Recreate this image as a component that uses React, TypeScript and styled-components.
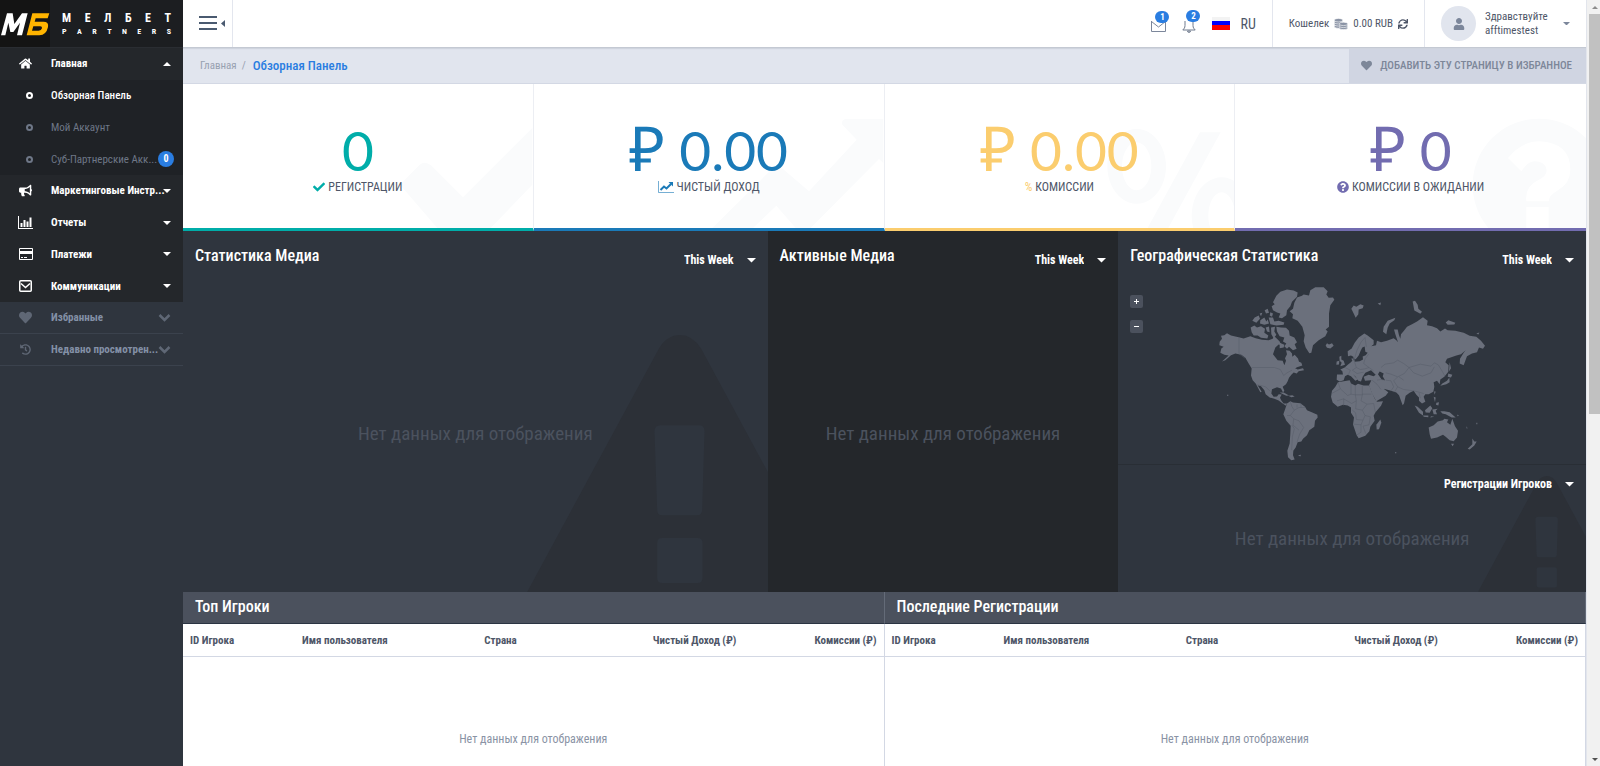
import React from 'react';
import styled, { createGlobalStyle, css } from 'styled-components';
import {
  FaHome, FaBullhorn, FaHeart, FaHistory, FaCheck,
  FaQuestionCircle, FaUser, FaSync,
} from 'react-icons/fa';

const c = {
  side: '#2f353e', menu: '#24272b', sub: '#1f2226', text: '#4e5668',
  muted: '#8a93a5', blue: '#2a7de1', line: '#d3d8e4',
};

const GlobalStyle = createGlobalStyle`
  * { box-sizing: border-box; }
  body { margin: 0; background: #fff; }
  body, button, select, table {
    font-family: 'Roboto Condensed', 'Open Sans Condensed', 'Open Sans', sans-serif;
  }
  a { color: inherit; text-decoration: none; }
  ul { list-style: none; margin: 0; padding: 0; }
  h2, p { margin: 0; }
  button { border: 0; padding: 0; background: none; color: inherit; cursor: pointer; }
`;

const Frame = styled.div`
  display: grid;
  grid-template-columns: 183px minmax(0, 1fr) 14px;
  height: 100vh;
  overflow: hidden;
`;

/* Sidebar */

const Sidebar = styled.aside`
  background: ${c.side};
  color: #fff;
`;

const Brand = styled.a`
  display: flex;
  height: 48px;
  background: #1c1e21;
  border-bottom: 1px solid #2a2d32;
`;

const BrandMark = styled.span`
  display: flex;
  align-items: center;
  width: 50px;
  background: #141414;
`;

const BrandText = styled.span`
  display: flex;
  flex: 1;
  flex-direction: column;
  justify-content: center;
  padding: 0 12px;
`;

const Spread = styled.span<{ $size: number }>`
  display: flex;
  justify-content: space-between;
  font-size: ${(p) => p.$size}px;
  line-height: ${(p) => p.$size + 4}px;
  font-weight: 700;
`;

const Menu = styled.ul`
  display: flex;
  flex-direction: column;
  height: 254px;
  background: ${c.menu};
`;

const MenuItem = styled.li<{ $rows?: number }>`
  display: grid;
  flex: ${(p) => p.$rows ?? 1} 1 0;
  grid-auto-rows: 1fr;
`;

const SubMenu = styled.ul`
  display: grid;
  grid-row: span 3;
  grid-auto-rows: 1fr;
  background: ${c.sub};
`;

const rowStyle = css`
  display: grid;
  grid-template-columns: 51px minmax(0, 1fr) auto;
  align-items: center;
  width: 100%;
  height: 100%;
  padding-right: 12px;
  text-align: left;
  font-size: 11px;
  font-weight: 700;
  white-space: nowrap;
`;

const MenuButton = styled.button`${rowStyle}`;

const SubLink = styled.a<{ $active?: boolean }>`
  ${rowStyle}
  padding-right: 9px;
  color: ${(p) => (p.$active ? '#fff' : '#6e7787')};
  font-weight: ${(p) => (p.$active ? 500 : 400)};
`;

const RowIcon = styled.span`
  display: flex;
  justify-content: center;
  font-size: 13px;
`;

const Dot = styled.span`
  width: 7px;
  height: 7px;
  justify-self: center;
  margin-left: 8px;
  border: 2px solid currentColor;
  border-radius: 50%;
`;

const Count = styled.span`
  width: 16px;
  height: 16px;
  border-radius: 50%;
  background: ${c.blue};
  color: #fff;
  font-size: 10px;
  line-height: 16px;
  font-weight: 700;
  text-align: center;
`;

const Extra = styled.li`
  height: 32px;
  border-bottom: 1px solid #3b424d;
  color: #8390a6;
  & svg { color: #5f6775; }
`;

/* Header */

const Main = styled.main`
  display: flex;
  flex-direction: column;
  min-width: 0;
  overflow: hidden;
`;

const Header = styled.header`
  display: flex;
  flex: none;
  height: 48px;
  border-bottom: 1px solid #c4c9d3;
  box-shadow: 0 1px 1px #cfd4de;
  color: ${c.text};
  z-index: 1;
`;

const Toggle = styled.button`
  display: flex;
  align-items: center;
  gap: 4px;
  width: 50px;
  padding-left: 16px;
  border-right: 1px solid #e3e6ee;
`;

const HeaderGroup = styled.div<{ $gap: number; $push?: boolean }>`
  display: flex;
  align-items: center;
  gap: ${(p) => p.$gap}px;
  padding: 0 16px;
  margin-left: ${(p) => (p.$push ? 'auto' : '0')};
  border-right: 1px solid #e3e6ee;
  font-size: 11px;
  white-space: nowrap;
  &:last-child { border-right: 0; }
`;

const Notice = styled.button`
  position: relative;
  display: flex;
  padding-top: 4px;
`;

const NoticeBadge = styled.span`
  position: absolute;
  top: -5px;
  left: 4px;
  width: 14px;
  height: 12px;
  border-radius: 6px;
  background: ${c.blue};
  color: #fff;
  font-size: 9px;
  line-height: 12px;
  font-weight: 700;
`;

const Language = styled.button`
  display: flex;
  align-items: center;
  gap: 10px;
  font-size: 14px;
`;

const Avatar = styled.span`
  display: grid;
  place-items: center;
  width: 35px;
  height: 35px;
  border-radius: 50%;
  background: #e1e5ee;
  color: #7c879b;
  font-size: 12px;
`;

const Hello = styled.span`
  width: 69px;
  line-height: 14px;
`;

/* Breadcrumb */

const Crumbs = styled.nav`
  display: flex;
  flex: none;
  height: 36px;
  align-items: center;
  gap: 5px;
  padding-left: 17px;
  border-bottom: 1px solid ${c.line};
  background: #e1e5ee;
  color: #98a1b1;
  font-size: 11px;
`;

const Current = styled.a`
  padding-left: 2px;
  color: ${c.blue};
  font-size: 13px;
  font-weight: 500;
`;

const Favourite = styled.button`
  display: flex;
  align-items: center;
  gap: 8px;
  height: 100%;
  margin-left: auto;
  padding: 0 14px 0 12px;
  background: #d0d5e2;
  color: #7d8799;
  font-size: 11px;
  font-weight: 500;
  text-transform: uppercase;
`;

/* Summary cards */

const Cards = styled.section`
  display: grid;
  flex: none;
  grid-template-columns: repeat(4, 1fr);
`;

const Card = styled.article<{ $tone: string }>`
  position: relative;
  display: flex;
  flex-direction: column;
  align-items: center;
  height: 147px;
  padding-top: 36px;
  border-right: 1px solid #eceef3;
  border-bottom: 3px solid ${(p) => p.$tone};
  color: ${(p) => p.$tone};
  overflow: hidden;
  &:last-child { border-right: 0; }
`;

const Amount = styled.p`
  position: relative;
  display: flex;
  align-items: baseline;
  gap: 14px;
  height: 60px;
  font-family: Lato, sans-serif;
  font-size: 55px;
  line-height: 60px;
`;

const Rouble = styled.span`
  font-family: 'Liberation Sans', sans-serif;
  font-size: 62px;
  line-height: 60px;
`;

const CardLabel = styled.p`
  position: relative;
  display: flex;
  align-items: center;
  gap: 3px;
  font-size: 12px;
  line-height: 14px;
  text-transform: uppercase;
  & > b { color: ${c.text}; font-weight: 400; }
`;

const Watermark = styled.svg`
  position: absolute;
  right: 0;
  bottom: 0;
  fill: #fafbfc;
`;

/* Dark panels */

const Panels = styled.section`
  display: grid;
  flex: none;
  grid-template-columns: 5fr 3fr 4fr;
  height: 361px;
  background: ${c.side};
`;

const Panel = styled.article<{ $dark?: boolean }>`
  position: relative;
  display: flex;
  flex-direction: column;
  min-width: 0;
  background: ${(p) => (p.$dark ? c.menu : c.side)};
  color: #fff;
`;

const PanelHead = styled.header`
  position: relative;
  z-index: 1;
  display: flex;
  justify-content: space-between;
  padding: 14px 12px 0;
`;

const Title = styled.h2`
  font-size: 16px;
  line-height: 22px;
  font-weight: 500;
`;

const SelectWrap = styled.label`
  position: relative;
  z-index: 1;
  display: flex;
  align-items: center;
  justify-content: flex-end;
  height: 30px;
  & > svg { position: absolute; right: 0; top: 13px; pointer-events: none; }
`;

const Select = styled.select`
  appearance: none;
  border: 0;
  padding: 0 22px 0 0;
  background: transparent;
  color: #fff;
  font-size: 12px;
  font-weight: 700;
  text-align-last: right;
  & option { color: #222; }
`;

const Empty = styled.p`
  position: relative;
  z-index: 1;
  color: #4b525e;
  font-size: 19px;
  line-height: 24px;
  text-align: center;
`;

const Centered = styled.div`
  display: grid;
  flex: 1;
  place-items: center;
`;

const Alert = styled.svg`
  position: absolute;
  right: 0;
  bottom: 0;
  fill: #2c3037;
`;

const MapArea = styled.div`
  position: relative;
  display: flex;
  flex: 1;
  justify-content: center;
  padding-top: 10px;
`;

const Zoom = styled.div`
  position: absolute;
  top: 20px;
  left: 12px;
  display: grid;
  gap: 12px;
`;

const ZoomButton = styled.button`
  display: grid;
  place-items: center;
  width: 13px;
  height: 13px;
  border-radius: 2px;
  background: #4b515d;
`;

const GeoFoot = styled.div`
  position: relative;
  display: flex;
  flex-direction: column;
  gap: 28px;
  height: 128px;
  padding: 4px 12px 0;
  border-top: 1px solid #292e35;
`;

/* Tables */

const Tables = styled.section`
  display: grid;
  flex: 1;
  grid-template-columns: 1fr 1fr;
`;

const TableTitle = styled(Title)`
  height: 32px;
  padding-left: 12px;
  border-bottom: 1px solid #2b3442;
  border-right: 1px solid #646b78;
  background: #4b515d;
  color: #fff;
  line-height: 30px;
`;

const Table = styled.table`
  width: 100%;
  table-layout: fixed;
  border-spacing: 0;
  border-right: 1px solid ${c.line};
`;

const Th = styled.th<{ $width: number; $right?: boolean }>`
  width: ${(p) => p.$width}%;
  height: 33px;
  padding: 0 7px;
  border-bottom: 1px solid ${c.line};
  color: ${c.text};
  font-size: 11px;
  font-weight: 700;
  white-space: nowrap;
  text-align: ${(p) => (p.$right ? 'right' : 'left')};
`;

const EmptyCell = styled.td`
  height: 163px;
  padding: 0;
  color: ${c.muted};
  font-size: 12px;
  text-align: center;
`;

/* Scrollbar column */

const ScrollTrack = styled.div`
  display: flex;
  flex-direction: column;
  align-items: center;
  padding: 6px 0 5px 2px;
  background: #f1f1f1;
  border-left: 1px solid #e2e5ec;
`;

const ScrollThumb = styled.div`
  width: 11px;
  height: 53%;
  margin: 5px 0 auto;
  background: #c1c1c1;
`;

/* Drawings */

const Caret = ({ up = false, w = 8, fill = 'currentColor' }: { up?: boolean; w?: number; fill?: string }) => (
  <svg width={w} height={w / 2} viewBox="0 0 8 4" fill={fill} aria-hidden="true">
    <path d={up ? 'M0 4L4 0l4 4z' : 'M0 0h8L4 4z'} />
  </svg>
);

const ChevronIcon = () => (
  <svg width="13" height="9" viewBox="0 0 13 9" fill="none" stroke="currentColor" strokeWidth="2.500" aria-hidden="true">
    <path d="M1.500 2l5 5 5-5" />
  </svg>
);

const BarsIcon = () => (
  <svg width="15" height="13" viewBox="0 0 15 13" fill="currentColor">
    <path d="M0 0h1v12h14v1H0zM2.500 7h2v4h-2zM5.500 4h2v7h-2zM8.500 5.500h2V11h-2zM11.500 1.500h2V11h-2z" />
  </svg>
);

const CardIcon = () => (
  <svg width="14" height="12" viewBox="0 0 14 12" fill="currentColor">
    <path fillRule="evenodd" d="M1 0h12q1 0 1 1v10q0 1-1 1H1q-1 0-1-1V1q0-1 1-1zM1 1v2h12V1zM1 6v5h12V6zM2 9h2v1H2zM5 9h3v1H5z" />
  </svg>
);

const MailSquareIcon = () => (
  <svg width="13" height="12" viewBox="0 0 13 12" fill="none" stroke="currentColor" strokeWidth="1.500">
    <rect x="0.750" y="0.750" width="11.500" height="10.500" rx="1" />
    <path d="M2 3.500l4.500 4 4.500-4" />
  </svg>
);

const EnvelopeIcon = () => (
  <svg width="15" height="12" viewBox="0 0 15 12" fill="none" stroke="#7c879b" strokeWidth="1">
    <path d="M.5 1v10.500h14V1M.5 1.500l7 5.500 7-5.500" />
  </svg>
);

const BellIcon = () => (
  <svg width="14" height="14" viewBox="0 0 14 14" fill="none" stroke="#6f7a8d" strokeWidth="1">
    <path d="M3 2v4.500c0 2.500-1 3-2.200 4.500h12.400C12 9.500 11 9 11 6.500V2M5.500 12h3l-.5 1.200H6z" />
  </svg>
);

const FlagIcon = () => (
  <svg width="18" height="13" viewBox="0 0 18 13">
    <path fill="#f3f3f3" d="M0 0h18v4H0z" />
    <path fill="#00f" d="M0 4h18v4H0z" />
    <path fill="#f00" d="M0 8h18v5H0z" />
  </svg>
);

const CoinsIcon = () => (
  <svg width="14" height="12" viewBox="0 0 14 12" fill="#8a93a5" stroke="#fff" strokeWidth=".6">
    <ellipse cx="4.500" cy="8.500" rx="4.200" ry="1.800" />
    <ellipse cx="4.500" cy="6.300" rx="4.200" ry="1.800" />
    <ellipse cx="4.500" cy="4.200" rx="4.200" ry="1.800" />
    <ellipse cx="4.500" cy="2.200" rx="4.200" ry="1.800" />
    <ellipse cx="9.500" cy="9.900" rx="4.200" ry="1.700" />
    <ellipse cx="9.500" cy="7.900" rx="4.200" ry="1.700" />
    <ellipse cx="9.500" cy="5.900" rx="4.200" ry="1.700" />
  </svg>
);

const TrendIcon = () => (
  <svg width="16" height="12" viewBox="0 0 16 12" fill="none" stroke="currentColor">
    <path strokeWidth="1" opacity=".6" d="M.5 0v11.500H16" />
    <path strokeWidth="2" d="M2.500 9L6 5.500l2.500 2L13 3" />
    <path fill="currentColor" stroke="none" d="M10.500 1H15v4.500z" />
  </svg>
);

const HamburgerIcon = () => (
  <svg width="18" height="15" viewBox="0 0 18 15" fill="#4a5a70">
    <path d="M0 0h18v2H0zM0 6h18v2H0zM0 12h18v2H0z" />
  </svg>
);

const LogoMark = () => (
  <svg width="50" height="24" viewBox="0 0 150 72" aria-label="МБ">
    <path fill="#fff" d="M3 70L21 4h17l5 32L66 4h17L66 70H51l9-38-20 28h-9l-6-28-9 38z" />
    <path fill="#ffb400" fillRule="evenodd" d="M97 4h51l-5 15h-36l-3 10h26q17 0 14 16-5 24-26 25H80zM100 43l-4 13h20q8 0 10-7 1-6-5-6z" />
  </svg>
);

const AlertMark = ({ scale }: { scale: number }) => (
  <Alert width={241 * scale} height={257 * scale} viewBox="80 104 722 771" aria-hidden="true">
    <path
      fillRule="evenodd"
      d="M80 875L475 145Q500 104 538 104T602 145L802 515V875ZM480 375Q461 375 462 395L470 630Q470 645 485 645H590Q604 645 605 630L612 395Q613 375 595 375ZM485 713Q470 713 470 728V833Q470 848 485 848H591Q606 848 606 833V728Q606 713 591 713Z"
    />
  </Alert>
);

const WorldMap = () => (
  <svg width="270" height="177" viewBox="320 165 810 530" role="img" aria-label="Карта мира">
    <g fill="#6b707c">
      {/* North America */}
      <path d="M328 335L335 326 332 317 342 315 350 309 362 316 385 321 400 325 420 318 436 324 455 329 475 330 487 326 492 318 500 326 508 334 513 345 505 343 495 352 488 372 502 390 517 392 522 405 527 392 524 384 530 372 527 360 538 362 545 370 546 380 553 374 563 385 566 395 573 398 576 406 560 411 545 420 555 414 562 418 578 414 581 420 565 423 559 430 550 427 543 434 536 443 532 453 527 462 517 470 522 482 518 487 512 475 500 471 485 477 483 490 490 500 500 499 505 492 514 493 509 503 513 511 520 520 530 520 527 527 517 520 505 511 492 506 478 502 466 492 462 480 452 468 442 465 454 485 450 486 436 460 427 450 422 436 424 415 415 400 405 383 393 374 375 370 362 375 345 390 335 394 355 376 342 374 330 368 333 355 340 350 327 345Z" />
      {/* Arctic islands */}
      <path d="M488 216L498 197 510 185 530 178 550 181 562 187 560 200 545 215 540 228 530 240 528 255 515 264 505 262 510 250 500 247 488 240 484 228 493 222Z" />
      <path d="M463 240L472 236 476 248 467 250ZM480 246L488 250 485 260 478 256ZM426 272L433 262 445 256 449 266 438 278ZM448 250L456 248 452 258ZM450 270L462 262 468 274 472 268 476 280 462 284 449 280ZM475 262L488 262 492 274 505 272 522 277 520 284 498 286 480 282Z" />
      <path d="M421 292L432 286 440 292 452 288 464 296 462 308 474 316 471 325 452 323 442 316 430 316 424 306ZM466 292L476 289 478 306 470 304ZM482 292L494 290 492 304 498 314 490 324 483 312Z" />
      <path d="M498 290L512 292 527 293 536 302 538 316 552 322 560 336 553 342 559 356 548 360 536 350 530 356 522 348 528 340 518 334 522 322 508 318 500 304ZM508 338L522 344 520 352 508 354Z" />
      {/* Greenland */}
      <path d="M538 243L548 236 552 218 560 202 575 197 580 193 596 196 600 180 615 171 640 171 652 183 648 193 655 203 668 202 672 209 660 225 656 250 656 290 646 298 652 304 645 318 625 330 608 345 603 368 597 369 586 352 580 333 583 315 576 290 562 272 546 264 548 252Z" />
      <path d="M646 346L650 339 656 343 665 339 670 347 660 355 650 353Z" />
      {/* Caribbean */}
      <path d="M508 487L520 487 536 496 528 497 515 491ZM534 497L546 495 553 499 543 501Z" />
      {/* South America */}
      <path d="M530 520L540 513 548 517 570 519 584 530 590 540 606 547 621 554 622 562 614 572 612 590 597 600 590 615 578 626 573 634 562 636 556 652 549 662 548 675 553 688 543 690 533 681 531 662 538 640 540 610 541 587 528 572 519 552 524 538Z" />
      <path d="M563 675L572 674 570 679Z" />
      {/* Africa */}
      <path d="M683 456L700 453 718 450 722 460 735 466 743 461 760 466 777 466 784 485 793 505 800 515 818 513 812 527 795 547 790 557 793 572 780 590 777 603 765 617 745 624 739 615 728 583 731 562 722 548 722 532 712 526 698 524 682 530 667 517 662 500 665 482 675 470Z" />
      <path d="M810 568L813 578 806 597 799 598 798 584Z" />
      {/* Europe and Asia */}
      <path d="M680 433L698 433 696 423 690 418 703 412 714 402 720 398 726 392 723 385 732 384 733 395 748 393 758 388 757 379 766 375 772 368 765 365 763 349 756 352 751 362 745 376 738 385 730 391 729 380 722 376 713 378 712 363 724 355 733 338 745 322 762 310 772 316 790 330 790 342 783 348 797 345 800 332 812 336 830 332 850 324 858 330 863 336 855 312 851 298 862 298 866 315 870 326 872 312 882 300 890 290 905 282 920 274 938 261 952 272 950 285 965 288 980 294 990 304 1004 295 1012 300 1035 302 1060 308 1078 317 1098 320 1112 332 1124 347 1118 356 1106 352 1100 366 1085 370 1070 378 1060 405 1048 400 1049 386 1060 368 1066 360 1052 372 1038 376 1010 386 1005 396 1015 405 1014 425 1002 440 990 448 988 462 980 452 970 456 972 470 969 485 955 492 945 492 940 500 945 515 935 520 926 512 926 502 918 494 910 482 898 488 886 497 881 520 877 525 866 495 858 487 842 482 820 476 834 486 826 497 798 513 785 490 776 465 783 450 764 452 760 440 775 434 790 438 796 434 782 420 765 428 757 440 752 454 744 452 736 440 728 432 742 448 735 452 722 438 712 434 704 438 700 450 688 454 679 449ZM808 424L803 432 814 448 824 450 817 438 820 430Z" fillRule="evenodd" />
      <path d="M687 380L693 377 693 388 700 392 704 404 690 408 694 398 688 392ZM679 394L687 392 686 403 678 404Z" />
      <path d="M723 236L730 226 738 230 750 222 760 226 757 234 745 238 744 252 736 263 730 250ZM802 220L812 217 810 225ZM855 263L852 270 838 280 832 293 828 312 818 305 820 290 832 272ZM907 214L914 212 922 224 924 236 935 245 930 251 912 241ZM1006 277L1014 270 1035 278 1032 283 1012 284ZM1098 310L1107 307 1104 313Z" />
      <path d="M1018 396L1022 414 1016 424ZM1014 430L1026 434 1022 442 1012 440ZM1017 442L1018 456 1008 462 990 467 996 460 1010 452ZM971 484L976 484 973 494Z" />
      {/* South-east Asia and Oceania */}
      <path d="M913 526L922 530 938 545 938 556 926 548ZM938 556L954 556 954 561 940 560ZM944 540L960 526 966 534 958 548 946 547ZM966 538L982 536 976 542 980 552 970 552ZM970 500L976 502 974 516ZM978 518L986 516 984 526 977 524ZM962 558L972 560 960 562ZM990 543L1002 543 1018 546 1036 562 1024 562 1006 552 996 550Z" />
      <path d="M955 592L970 585 982 574 998 570 1002 566 1014 568 1010 576 1020 584 1026 566 1034 588 1043 602 1040 622 1030 633 1018 630 1006 620 998 614 980 622 962 626 958 612ZM1022 641L1031 641 1027 648ZM1086 625L1092 634 1099 634 1092 646 1078 658 1072 656 1086 642Z" />
      <path d="M1040 553l6 4-4 1zM350 494h4v3h-4zM854 666h4v3h-4zM1068 588l4 6-3 1zM1098 578h3v4h-3z" />
    </g>
    <g fill="none" stroke="#575d68" strokeWidth="1.500">
      <path d="M386 322V371L404 384M424 412H492L510 418 520 436 530 428 545 420M437 463L452 466 466 470 480 484" />
      <path d="M540 515L545 530 552 540 540 556 530 556M552 540L566 532 584 532M540 556L550 566 566 572 580 592 568 612 560 636M545 585L552 596 546 620 544 660M550 566L548 585 566 600" />
      <path d="M683 456L690 476 664 490M690 476L712 496 722 492 722 460M735 466V494L756 494V466M756 492H783M722 492L735 494 738 512 724 520 700 506 680 512M700 506V526M756 494L752 512 770 522 790 520 795 546M738 512L736 536 756 540 770 522M726 540L736 548 738 568 758 570 764 556 756 540M730 582L752 584 758 570M752 584L752 606 740 614M764 556L780 560 776 584 758 588 766 610" />
      <path d="M733 384L740 360 752 336 764 322M764 322L768 350M775 372L764 386 760 400 776 412 790 422M733 396L738 412 750 418 764 416 776 412M704 412L720 420 714 434M738 412L726 420 740 430 760 426" />
      <path d="M812 412L824 402 850 398 862 390 880 400 896 412 930 402 962 408 972 398 984 404 996 424 1004 438M896 412L910 428 936 438 962 428 972 410M896 412L882 430 862 440 842 432 826 428M862 440L850 452 862 470 880 478 910 482M826 450L842 452 850 470 842 482M785 450L800 462 812 478M800 450L812 448 824 450M880 450L866 440M862 470L852 486" />
      <path d="M910 482L926 486 940 490M926 488L930 504M560 523V532M572 520V532" />
    </g>
  </svg>
);

/* Page data */

const marks = {
  check: { box: '660 100 400 335', d: 'M663 305L722 245Q738 232 756 247L852 343 1060 135V305L935 435H775Z' },
  trend: { box: '543 100 520 335', d: 'M550 435L735 252Q744 242 755 252L840 325 983 170 940 125Q936 110 950 108H1063V240L1050 228 845 435H800L742 368 672 435Z' },
  percent: { box: '663 100 400 335', d: 'M770 138a88 112 0 1 0 .1 0zM770 178a44 72 0 1 1-.1 0zM960 148h62L862 440h-62zM1025 283a90 115 0 1 0 .1 0zM1025 328a40 70 0 1 1-.1 0z' },
  question: { box: '718 100 350 335', d: 'M928 107a199 199 0 1 0 .1 0zM835 225Q875 175 930 175 1022 180 1022 260 1022 300 985 322 957 338 957 355H890Q885 310 925 292 955 278 950 258 945 235 915 235 895 235 875 265ZM890 372H957V440H890Z' },
};

const cards = [
  { tone: '#00ada9', sign: false, value: '0', label: 'Регистрации', icon: <FaCheck size={12} />, mark: marks.check },
  { tone: '#1a7ab8', sign: true, value: '0.00', label: 'Чистый доход', icon: <TrendIcon />, mark: marks.trend },
  { tone: '#fbcd6e', sign: true, value: '0.00', label: 'Комиссии', icon: <span>%</span>, mark: marks.percent },
  { tone: '#726cb0', sign: true, value: '0', label: 'Комиссии в ожидании', icon: <FaQuestionCircle size={12} />, mark: marks.question },
];

const menu = [
  { icon: <FaBullhorn />, label: 'Маркетинговые Инстр...' },
  { icon: <BarsIcon />, label: 'Отчеты' },
  { icon: <CardIcon />, label: 'Платежи' },
  { icon: <MailSquareIcon />, label: 'Коммуникации' },
];

const PanelSelect = ({ value, label }: { value: string; label: string }) => (
  <SelectWrap>
    <Select aria-label={label} defaultValue={value}>
      <option>{value}</option>
    </Select>
    <Caret w={9} />
  </SelectWrap>
);

const PlayerTable = ({ title }: { title: string }) => (
  <article>
    <TableTitle>{title}</TableTitle>
    <Table>
      <thead>
        <tr>
          <Th $width={16}>ID Игрока</Th>
          <Th $width={26}>Имя пользователя</Th>
          <Th $width={18}>Страна</Th>
          <Th $width={20} $right>Чистый Доход (₽)</Th>
          <Th $width={20} $right>Комиссии (₽)</Th>
        </tr>
      </thead>
      <tbody>
        <tr><EmptyCell colSpan={5}>Нет данных для отображения</EmptyCell></tr>
      </tbody>
    </Table>
  </article>
);

export default function App() {
  return (
    <>
      <GlobalStyle />
      <Frame>
        <Sidebar>
          <Brand href="#">
            <BrandMark><LogoMark /></BrandMark>
            <BrandText>
              <Spread $size={12}>{[...'МЕЛБЕТ'].map((l, i) => <span key={i}>{l}</span>)}</Spread>
              <Spread $size={8}>{[...'PARTNERS'].map((l, i) => <span key={i}>{l}</span>)}</Spread>
            </BrandText>
          </Brand>
          <Menu>
            <MenuItem $rows={4}>
              <MenuButton>
                <RowIcon><FaHome /></RowIcon>
                <span>Главная</span>
                <Caret up />
              </MenuButton>
              <SubMenu>
                <li><SubLink href="#" $active><Dot /><span>Обзорная Панель</span></SubLink></li>
                <li><SubLink href="#"><Dot /><span>Мой Аккаунт</span></SubLink></li>
                <li><SubLink href="#"><Dot /><span>Суб-Партнерские Акк...</span><Count>0</Count></SubLink></li>
              </SubMenu>
            </MenuItem>
            {menu.map((m) => (
              <MenuItem key={m.label}>
                <MenuButton>
                  <RowIcon>{m.icon}</RowIcon>
                  <span>{m.label}</span>
                  <Caret />
                </MenuButton>
              </MenuItem>
            ))}
          </Menu>
          <ul>
            <Extra>
              <MenuButton><RowIcon><FaHeart /></RowIcon><span>Избранные</span><ChevronIcon /></MenuButton>
            </Extra>
            <Extra>
              <MenuButton><RowIcon><FaHistory size={11} /></RowIcon><span>Недавно просмотрен...</span><ChevronIcon /></MenuButton>
            </Extra>
          </ul>
        </Sidebar>

        <Main>
          <Header>
            <Toggle aria-label="Меню">
              <HamburgerIcon />
              <svg width="4" height="7" viewBox="0 0 4 7" fill="#4a5a70"><path d="M4 0v7L0 3.500z" /></svg>
            </Toggle>
            <HeaderGroup $gap={16} $push>
              <Notice aria-label="Сообщения"><EnvelopeIcon /><NoticeBadge>1</NoticeBadge></Notice>
              <Notice aria-label="Уведомления"><BellIcon /><NoticeBadge>2</NoticeBadge></Notice>
              <Language><FlagIcon />RU</Language>
            </HeaderGroup>
            <HeaderGroup $gap={5}>
              <span>Кошелек</span>
              <CoinsIcon />
              <span>0.00 RUB</span>
              <FaSync size={10} />
            </HeaderGroup>
            <HeaderGroup $gap={9}>
              <Avatar><FaUser /></Avatar>
              <Hello>Здравствуйте<br />afftimestest</Hello>
              <Caret w={7} fill="#7c879b" />
            </HeaderGroup>
          </Header>

          <Crumbs>
            <a href="#">Главная</a>
            <span>/</span>
            <Current href="#">Обзорная Панель</Current>
            <Favourite><FaHeart />Добавить эту страницу в избранное</Favourite>
          </Crumbs>

          <Cards>
            {cards.map((k) => (
              <Card key={k.label} $tone={k.tone}>
                <Watermark width={Number(k.mark.box.split(' ')[2]) / 3} height="112" viewBox={k.mark.box} preserveAspectRatio="xMaxYMax meet" aria-hidden="true">
                  <path fillRule="evenodd" d={k.mark.d} />
                </Watermark>
                <Amount>{k.sign && <Rouble>₽</Rouble>}{k.value}</Amount>
                <CardLabel>{k.icon}<b>{k.label}</b></CardLabel>
              </Card>
            ))}
          </Cards>

          <Panels>
            <Panel>
              <PanelHead><Title>Статистика Медиа</Title><PanelSelect value="This Week" label="Период" /></PanelHead>
              <Centered><Empty>Нет данных для отображения</Empty></Centered>
              <AlertMark scale={1} />
            </Panel>
            <Panel $dark>
              <PanelHead><Title>Активные Медиа</Title><PanelSelect value="This Week" label="Период" /></PanelHead>
              <Centered><Empty>Нет данных для отображения</Empty></Centered>
            </Panel>
            <Panel>
              <PanelHead><Title>Географическая Статистика</Title><PanelSelect value="This Week" label="Период" /></PanelHead>
              <MapArea>
                <WorldMap />
                <Zoom>
                  <ZoomButton aria-label="Увеличить"><svg width="5" height="5" viewBox="0 0 5 5" fill="#fff"><path d="M2 0h1v2h2v1H3v2H2V3H0V2h2z" /></svg></ZoomButton>
                  <ZoomButton aria-label="Уменьшить"><svg width="5" height="5" viewBox="0 0 5 5" fill="#fff"><path d="M0 2h5v1H0z" /></svg></ZoomButton>
                </Zoom>
              </MapArea>
              <GeoFoot>
                <AlertMark scale={0.45} />
                <PanelSelect value="Регистрации Игроков" label="Показатель" />
                <Empty>Нет данных для отображения</Empty>
              </GeoFoot>
            </Panel>
          </Panels>

          <Tables>
            <PlayerTable title="Топ Игроки" />
            <PlayerTable title="Последние Регистрации" />
          </Tables>
        </Main>

        <ScrollTrack aria-hidden="true">
          <Caret up w={6} fill="#8b8b8b" />
          <ScrollThumb />
          <Caret w={6} fill="#505050" />
        </ScrollTrack>
      </Frame>
    </>
  );
}
